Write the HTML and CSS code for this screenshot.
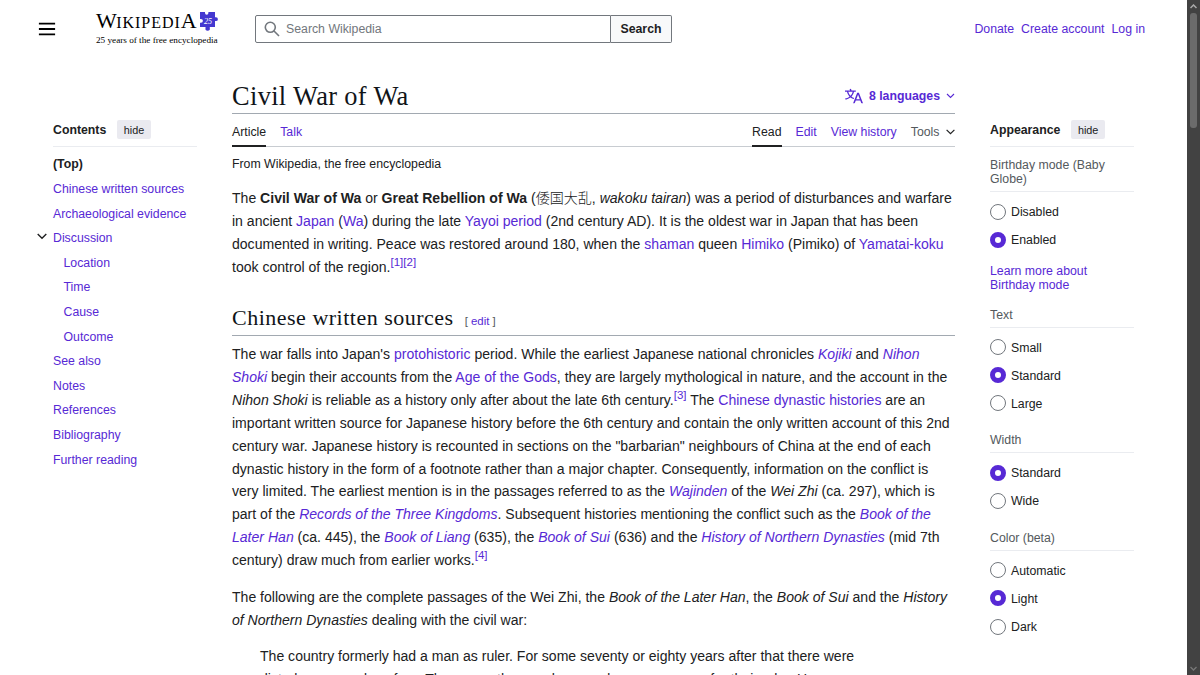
FILE: index.html
```html
<!DOCTYPE html>
<html lang="en">
<head>
    <meta charset="UTF-8">
    <title>Civil War of Wa - Wikipedia</title>
    <link rel="stylesheet" href="styles.css">
</head>
<body>
<div class="page">
    <header class="header">
        <button class="menu-btn" aria-label="Main menu">
            <svg width="18" height="18" viewBox="0 0 20 20"><path d="M1 3h18v2H1zm0 6h18v2H1zm0 6h18v2H1z"/></svg>
        </button>
        <a class="logo" href="#">
            <span class="logo-top">
                <span class="wordmark"><span class="big">W</span>IKIPEDI<span class="big">A</span></span>
                <svg class="puzzle" width="20" height="20" viewBox="0 0 20 20">
                    <path fill="#4438d0" d="M1 1h5v1a1.700 1.700 0 1 0 3.400 0V1h6.600v5.300h1a1.900 1.900 0 1 1 0 3.800h-1V16h-5.200v1a2.200 2.200 0 1 1-4.300 0v-1H1v-4.300h1a1.900 1.900 0 1 0 0-3.800H1z"/>
                    <text class="puzzle-text" x="5" y="13">25</text>
                </svg>
            </span>
            <span class="tagline">25 years of the free encyclopedia</span>
        </a>
        <form class="search">
            <div class="search-box">
                <svg class="search-icon" width="16" height="16" viewBox="0 0 16 16" fill="none" stroke="#72777d" stroke-width="1.600"><circle cx="6.300" cy="6.300" r="5"/><path d="M10 10l5 5"/></svg>
                <span>Search Wikipedia</span>
            </div>
            <button class="search-btn" type="button">Search</button>
        </form>
        <nav class="user-links">
            <a href="#">Donate</a>
            <a href="#">Create account</a>
            <a href="#">Log in</a>
        </nav>
    </header>

    <div class="columns">
        <!-- table of contents -->
        <nav class="sidebar toc">
            <div class="sidebar-header">
                <h2>Contents</h2>
                <button class="hide-btn">hide</button>
            </div>
            <ul class="toc-list">
                <li class="top">(Top)</li>
                <li><a href="#">Chinese written sources</a></li>
                <li><a href="#">Archaeological evidence</a></li>
                <li class="expanded">
                    <svg class="toc-arrow" width="10" height="7" viewBox="0 0 10 7" fill="none" stroke="#202122" stroke-width="1.400"><path d="M.7 1L5 5.300 9.300 1"/></svg>
                    <a href="#">Discussion</a>
                </li>
                <li class="sub"><a href="#">Location</a></li>
                <li class="sub"><a href="#">Time</a></li>
                <li class="sub"><a href="#">Cause</a></li>
                <li class="sub"><a href="#">Outcome</a></li>
                <li><a href="#">See also</a></li>
                <li><a href="#">Notes</a></li>
                <li><a href="#">References</a></li>
                <li><a href="#">Bibliography</a></li>
                <li><a href="#">Further reading</a></li>
            </ul>
        </nav>

        <main class="content">
            <div class="title-bar">
                <h1>Civil War of Wa</h1>
                <button class="lang-btn">
                    <svg width="18" height="18" viewBox="0 0 20 20" fill="#5729d5"><path d="M20 18h-1.440a.6.6 0 0 1-.4-.120.800.8 0 0 1-.230-.310L17 15h-5l-1 2.540a.8.8 0 0 1-.220.300.6.6 0 0 1-.4.140H9l4.550-11.470h1.890zm-3.530-4.310L14.890 9.500a12 12 0 0 1-.390-1.240q-.090.370-.190.690l-.190.560-1.580 4.190zm-6.300-1.580a13.400 13.400 0 0 1-2.910-1.410 11.460 11.460 0 0 0 2.810-5.370H12V4H7.310a4 4 0 0 0-.2-.560C6.870 2.790 6.600 2 6.600 2l-1.470.5s.4.890.6 1.500H0v1.330h2.150A11.230 11.230 0 0 0 5 10.700a17.200 17.200 0 0 1-5 2.100q.560.820.870 1.380a23.300 23.300 0 0 0 5.220-2.510 15.600 15.600 0 0 0 3.560 1.770zM3.630 5.330h4.910a8.100 8.100 0 0 1-2.450 4.450 9.100 9.100 0 0 1-2.460-4.450"/></svg>
                    <span>8 languages</span>
                    <svg class="lang-arrow" width="9" height="6" viewBox="0 0 9 6" fill="none" stroke="#5729d5" stroke-width="1.100"><path d="M1 1l3.500 3.500L8 1"/></svg>
                </button>
            </div>
            <div class="tabs">
                <a class="tab selected" href="#">Article</a>
                <a class="tab" href="#">Talk</a>
                <span class="spacer"></span>
                <a class="tab selected" href="#">Read</a>
                <a class="tab" href="#">Edit</a>
                <a class="tab" href="#">View history</a>
                <span class="tab tools">Tools
                    <svg width="9" height="6" viewBox="0 0 9 6" fill="none" stroke="#202122" stroke-width="1.200"><path d="M.6.800L4.500 4.700 8.400.8"/></svg>
                </span>
            </div>
            <div class="site-sub">From Wikipedia, the free encyclopedia</div>

            <p>The <b>Civil War of Wa</b> or <b>Great Rebellion of Wa</b> (<span class="ja" lang="ja">倭国大乱</span>, <i>wakoku tairan</i>) was a period of disturbances and warfare<br>
                in ancient <a href="#">Japan</a> (<a href="#">Wa</a>) during the late <a href="#">Yayoi period</a> (2nd century AD). It is the oldest war in Japan that has been<br>
                documented in writing. Peace was restored around 180, when the <a href="#">shaman</a> queen <a href="#">Himiko</a> (Pimiko) of <a href="#">Yamatai-koku</a><br>
                took control of the region.<sup><a href="#">[1]</a><a href="#">[2]</a></sup></p>

            <div class="section-heading">
                <h2>Chinese written sources</h2>
                <span class="edit-section">[ <a href="#">edit</a> ]</span>
            </div>

            <p>The war falls into Japan's <a href="#">protohistoric</a> period. While the earliest Japanese national chronicles <a href="#"><i>Kojiki</i></a> and <a href="#"><i>Nihon<br>
                Shoki</i></a> begin their accounts from the <a href="#">Age of the Gods</a>, they are largely mythological in nature, and the account in the<br>
                <i>Nihon Shoki</i> is reliable as a history only after about the late 6th century.<sup><a href="#">[3]</a></sup> The <a href="#">Chinese dynastic histories</a> are an<br>
                important written source for Japanese history before the 6th century and contain the only written account of this 2nd<br>
                century war. Japanese history is recounted in sections on the "barbarian" neighbours of China at the end of each<br>
                dynastic history in the form of a footnote rather than a major chapter. Consequently, information on the conflict is<br>
                very limited. The earliest mention is in the passages referred to as the <a href="#"><i>Wajinden</i></a> of the <i>Wei Zhi</i> (ca. 297), which is<br>
                part of the <a href="#"><i>Records of the Three Kingdoms</i></a>. Subsequent histories mentioning the conflict such as the <a href="#"><i>Book of the<br>
                Later Han</i></a> (ca. 445), the <a href="#"><i>Book of Liang</i></a> (635), the <a href="#"><i>Book of Sui</i></a> (636) and the <a href="#"><i>History of Northern Dynasties</i></a> (mid 7th<br>
                century) draw much from earlier works.<sup><a href="#">[4]</a></sup></p>

            <p>The following are the complete passages of the Wei Zhi, the <i>Book of the Later Han</i>, the <i>Book of Sui</i> and the <i>History<br>
                of Northern Dynasties</i> dealing with the civil war:</p>

            <blockquote>The country formerly had a man as ruler. For some seventy or eighty years after that there were<br>
                disturbances and warfare. Thereupon the people agreed upon a woman for their ruler. Her</blockquote>
        </main>

        <!-- appearance settings -->
        <aside class="sidebar appearance">
            <div class="sidebar-header">
                <h2>Appearance</h2>
                <button class="hide-btn">hide</button>
            </div>
            <section class="group birthday">
                <h3>Birthday mode (Baby Globe)</h3>
                <label class="option"><input type="radio" name="birthday">Disabled</label>
                <label class="option"><input type="radio" name="birthday" checked>Enabled</label>
                <a class="learn-more" href="#">Learn more about Birthday mode</a>
            </section>
            <section class="group">
                <h3>Text</h3>
                <label class="option"><input type="radio" name="text">Small</label>
                <label class="option"><input type="radio" name="text" checked>Standard</label>
                <label class="option"><input type="radio" name="text">Large</label>
            </section>
            <section class="group">
                <h3>Width</h3>
                <label class="option"><input type="radio" name="width" checked>Standard</label>
                <label class="option"><input type="radio" name="width">Wide</label>
            </section>
            <section class="group">
                <h3>Color (beta)</h3>
                <label class="option"><input type="radio" name="color">Automatic</label>
                <label class="option"><input type="radio" name="color" checked>Light</label>
                <label class="option"><input type="radio" name="color">Dark</label>
            </section>
        </aside>
    </div>
</div>
<div class="scrollbar">
    <svg width="7" height="5" viewBox="0 0 7 5" fill="none" stroke="#aaa" stroke-width="1.500"><path d="M.5 4l3-3 3 3"/></svg>
    <div class="thumb"></div>
    <svg width="7" height="5" viewBox="0 0 7 5" fill="none" stroke="#777" stroke-width="1.300"><path d="M.5 1l3 3 3-3"/></svg>
</div>
</body>
</html>
```
FILE: styles.css
```css
:root {
    --text: #202122;
    --subtle: #54595d;
    --link: #5729d5;
    --border: #a2a9b1;
    --border-light: #eaecf0;
}

* {
    box-sizing: border-box;
}
body {
    margin: 0;
    display: flex;
    height: 675px;
    overflow: hidden;
    background: #fff;
    color: var(--text);
    font-family: "Liberation Sans", Arial, sans-serif;
    font-size: 12.3px;
}
a {
    color: var(--link);
    text-decoration: none;
}
button {
    border: none;
    padding: 0;
    background: transparent;
    font-family: inherit;
    font-size: inherit;
    color: inherit;
}
h1, h2, h3, p, ul, blockquote {
    margin: 0;
    padding: 0;
}
svg {
    flex: none;
}
.page {
    width: 1187px;
    height: 675px;
    overflow: hidden;
}

/* header */
.header {
    display: flex;
    height: 58px;
    padding: 0 42px 0 38px;
}
.menu-btn {
    width: 18px;
    height: 58px;
    display: flex;
    align-items: center;
}
.logo {
    width: 124px;
    margin-left: 40px;
    padding-top: 10px;
    color: #000;
    white-space: nowrap;
    font-family: "Liberation Serif", serif;
}
.logo-top {
    display: flex;
    height: 21px;
}
.wordmark {
    width: 103px;
    font-size: 16px;
    line-height: 21px;
    letter-spacing: 0.95px;
}
.wordmark .big {
    font-size: 22px;
    letter-spacing: -0.5px;
}
.puzzle {
    margin-top: 1px;
}
.puzzle-text {
    fill: #fff;
    font-size: 8px;
    font-style: italic;
}
.tagline {
    display: block;
    margin-top: 4px;
    font-size: 9.2px;
    line-height: 11px;
}
.search {
    display: flex;
    width: 417px;
    height: 28px;
    margin: 15px 0 0 35px;
}
.search-box {
    display: flex;
    align-items: center;
    width: 356px;
    padding-left: 8px;
    gap: 6px;
    border: 1px solid #72777d;
    border-radius: 2px 0 0 2px;
    font-size: 12.3px;
    color: #72777d;
}
.search-btn {
    flex: 1;
    border: 1px solid #72777d;
    border-left: none;
    border-radius: 0 2px 2px 0;
    background: #f8f9fa;
    font-weight: bold;
}
.user-links {
    display: flex;
    gap: 7px;
    margin-left: auto;
    line-height: 58px;
}

/* columns */
.columns {
    display: grid;
    grid-template-columns: 144px 723px 144px;
    column-gap: 35px;
    padding-left: 53px;
}
.sidebar {
    padding-top: 62px;
}
.sidebar-header {
    display: flex;
    align-items: center;
    gap: 11px;
    height: 19px;
    padding-bottom: 7px;
    border-bottom: 1px solid var(--border-light);
    box-sizing: content-box;
}
.sidebar-header h2 {
    font-size: 12.3px;
}
.hide-btn {
    height: 19px;
    padding: 0 6.5px;
    border-radius: 2px;
    background: #eaeaf0;
    font-size: 10.8px;
}
.toc-list {
    margin-top: 5.4px;
    list-style: none;
}
.toc-list li {
    height: 24.6px;
    line-height: 24.6px;
}
.toc-list .top {
    font-weight: bold;
}
.toc-list .sub {
    padding-left: 10.5px;
}
.expanded {
    display: flex;
    align-items: center;
    gap: 6px;
    margin-left: -16px;
}
.toc-arrow {
    margin-bottom: 3px;
}

/* article */
.title-bar {
    display: flex;
    justify-content: space-between;
    align-items: center;
    height: 56px;
    padding-top: 20px;
    border-bottom: 1px solid var(--border);
}
h1 {
    font-family: Georgia, "Liberation Serif", serif;
    font-size: 26.4px;
    font-weight: normal;
    line-height: 34px;
    letter-spacing: 0.35px;
    color: #101418;
}
.lang-btn {
    display: flex;
    align-items: center;
    gap: 6px;
    padding-top: 1px;
    color: var(--link);
    font-weight: bold;
}
.tabs {
    display: flex;
    gap: 14px;
    height: 33px;
    border-bottom: 1px solid #c8ccd1;
}
.tab {
    height: 33px;
    line-height: 36px;
}
.tab.selected {
    color: var(--text);
    border-bottom: 2px solid var(--text);
}
.tools {
    display: flex;
    align-items: center;
    gap: 6.5px;
    padding-top: 2px;
    color: var(--subtle);
}
.spacer {
    flex: 1;
}
.site-sub {
    margin-top: 8px;
    line-height: 18px;
}
.content p, .content blockquote {
    font-size: 14.06px;
    line-height: 22.85px;
    white-space: nowrap;
}
.content p {
    margin: 14px 0;
}
.content .site-sub + p {
    margin-top: 14.2px;
}
.content .section-heading + p {
    margin-top: 7.3px;
}
.content blockquote {
    padding-left: 28px;
}
.ja {
    font-family: "Noto Sans CJK JP", sans-serif;
    font-weight: 300;
    line-height: 1;
}
sup {
    font-size: 11.5px;
    line-height: 1;
}
.section-heading {
    display: flex;
    align-items: baseline;
    gap: 11px;
    height: 36px;
    margin-top: 21.5px;
    border-bottom: 1px solid var(--border);
}
.section-heading h2 {
    font-family: Georgia, "Liberation Serif", serif;
    font-size: 22px;
    font-weight: normal;
    line-height: 36px;
    letter-spacing: 0.5px;
    color: #101418;
}
.edit-section {
    font-size: 11.4px;
    color: var(--subtle);
}

/* appearance */
.group {
    margin-top: 15.4px;
}
.group h3 {
    margin-bottom: 6px;
    padding-bottom: 5px;
    border-bottom: 1px solid var(--border-light);
    font-size: 12.3px;
    font-weight: normal;
    line-height: 14px;
    color: var(--subtle);
}
.birthday {
    margin-top: 11px;
}
.option {
    display: flex;
    align-items: center;
    gap: 5px;
    height: 28.1px;
}
.option input {
    appearance: none;
    width: 16px;
    height: 16px;
    margin: -1px 0 0;
    border: 1px solid #72777d;
    border-radius: 50%;
    background: #fff;
}
.option input:checked {
    border: 5px solid var(--link);
}
.learn-more {
    display: block;
    width: 110px;
    margin-top: 10px;
    line-height: 14px;
}

/* scrollbar */
.scrollbar {
    display: flex;
    flex-direction: column;
    align-items: center;
    width: 13px;
    height: 675px;
    padding: 4px 0;
    background: #424242;
}
.thumb {
    width: 7px;
    height: 115px;
    margin: 4px 0 auto;
    border-radius: 3px;
    background: #6b6b6b;
}
```
